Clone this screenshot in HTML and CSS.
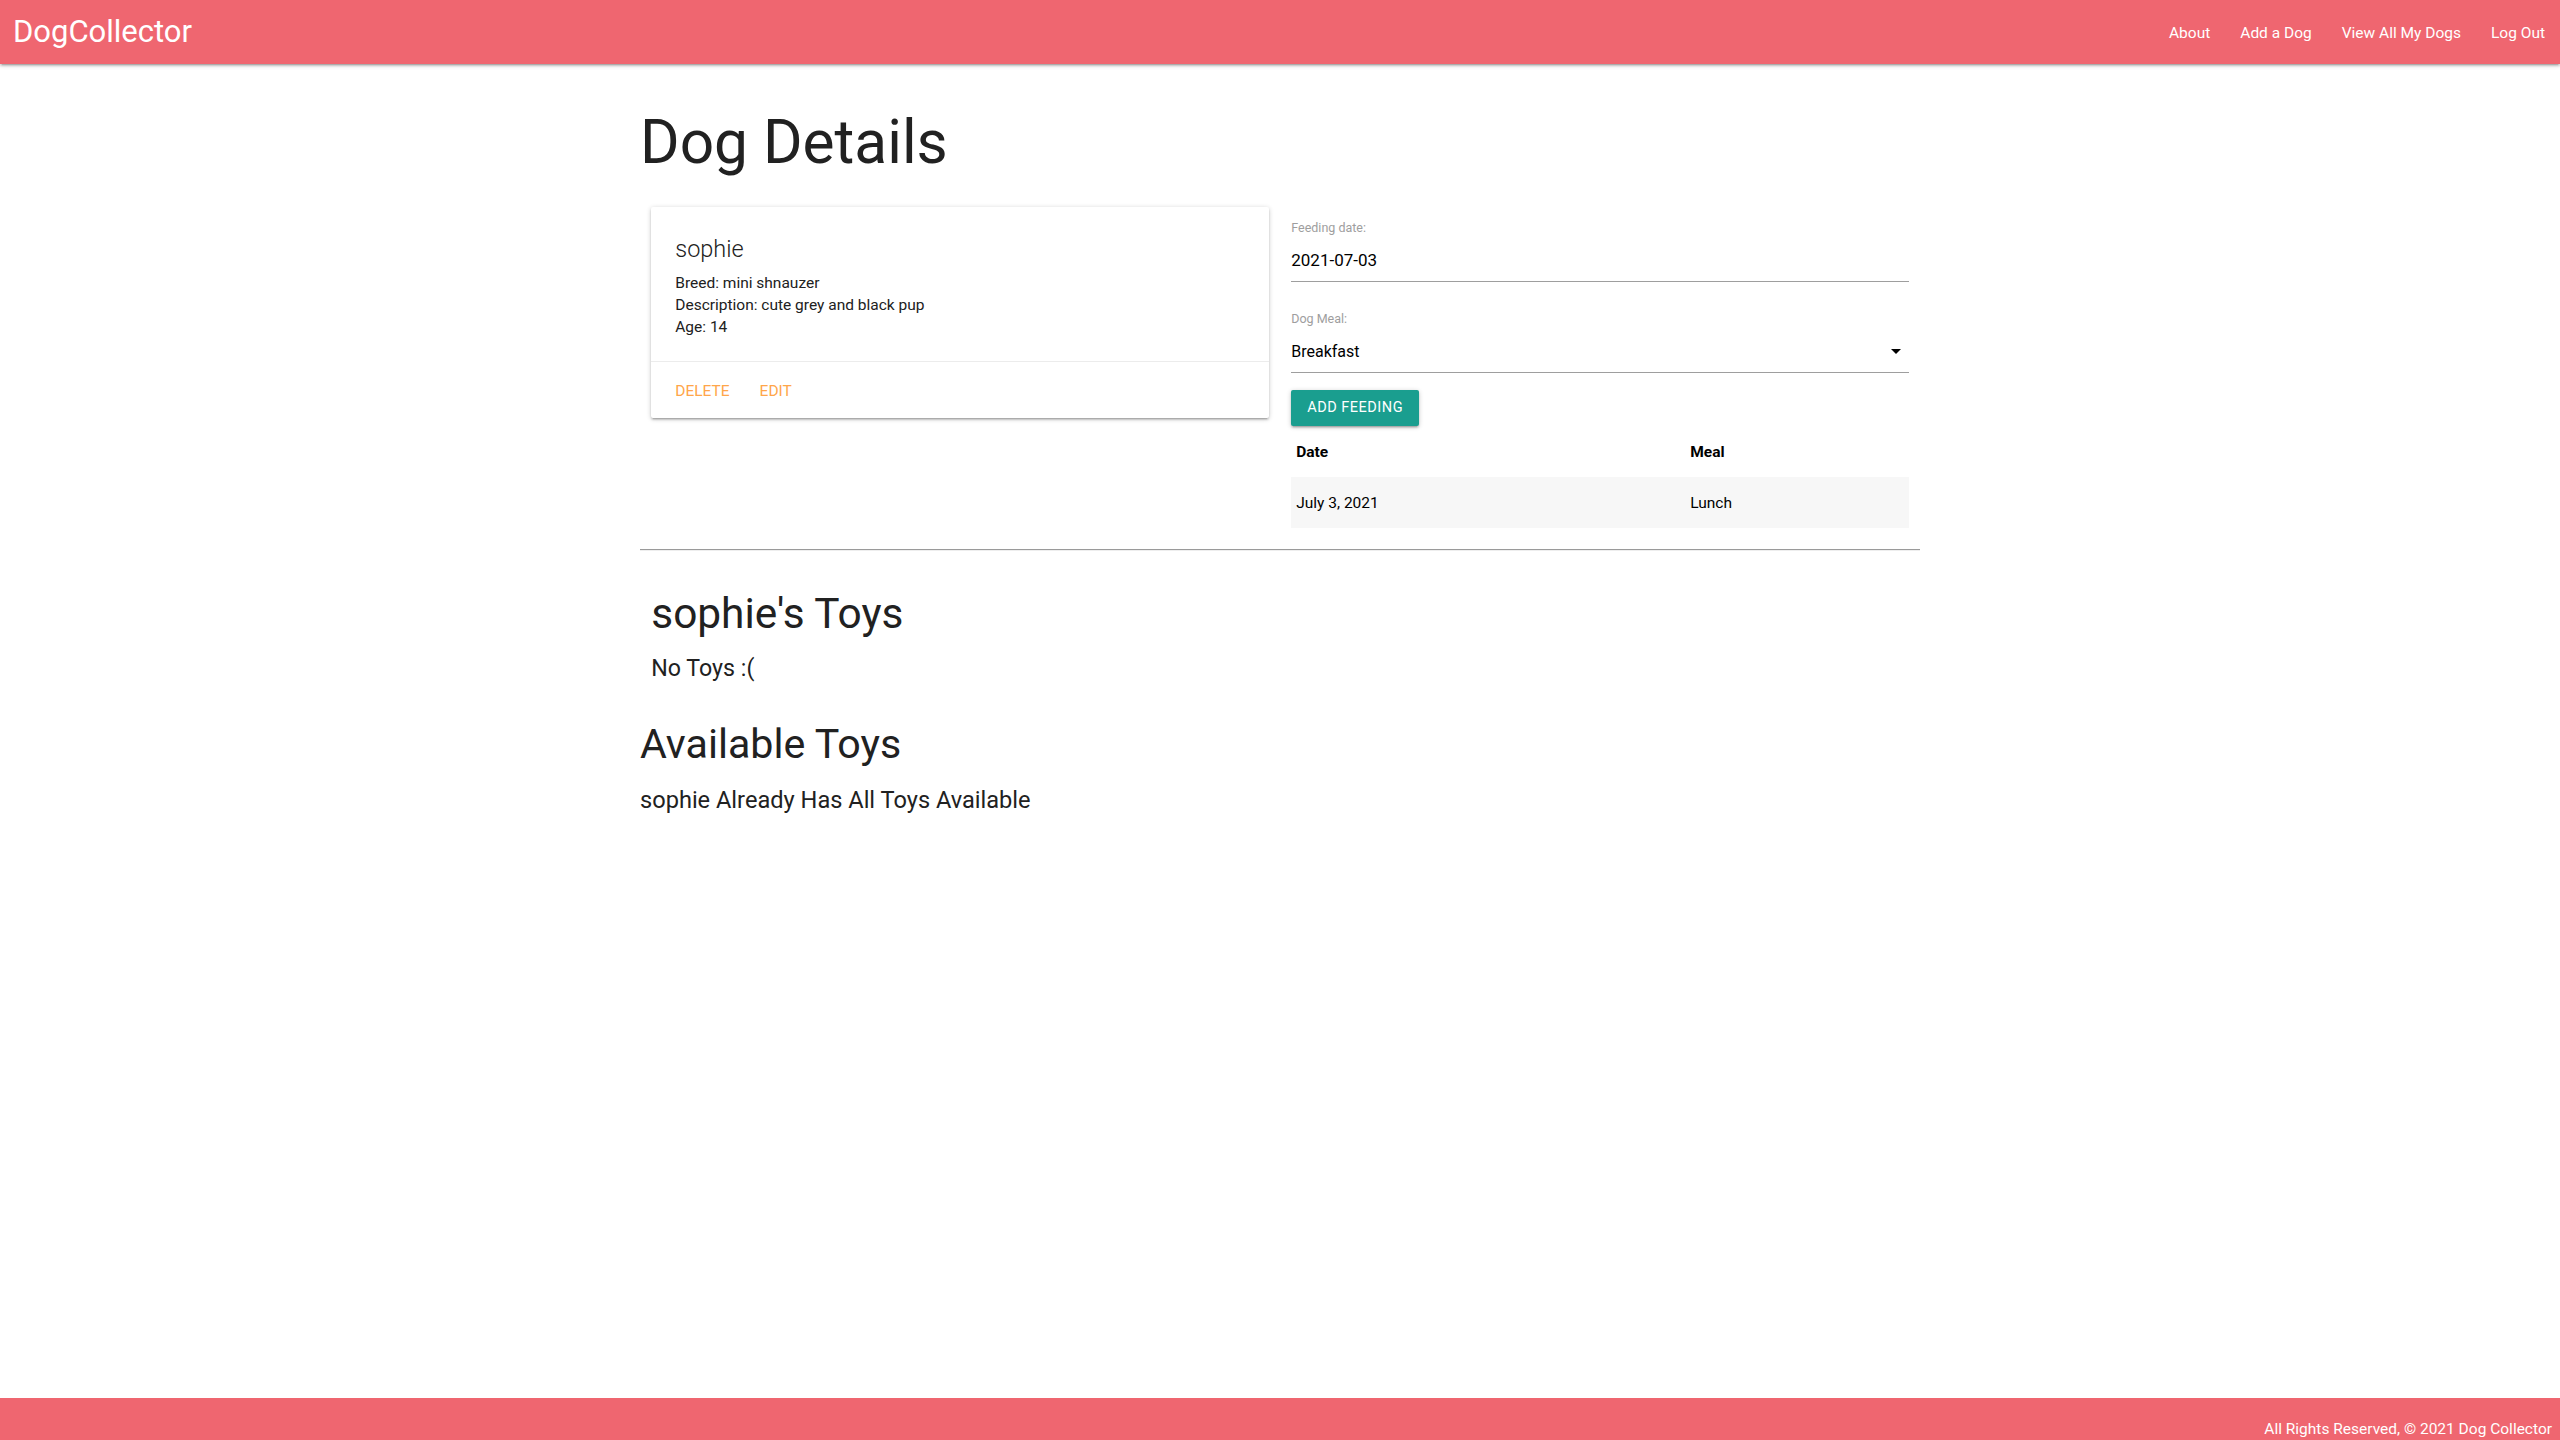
FILE: index.html
```html
<!DOCTYPE html>
<html lang="en">
<head>
<meta charset="utf-8">
<title>Dog Details</title>
<link rel="stylesheet" href="styles.css">
</head>
<body>
<header class="nav">
  <a class="brand" href="#">DogCollector</a>
  <ul class="nav-links">
    <li><a href="#">About</a></li>
    <li><a href="#">Add a Dog</a></li>
    <li><a href="#">View All My Dogs</a></li>
    <li><a href="#">Log Out</a></li>
  </ul>
</header>
<main class="container">
  <h1 class="page-title">Dog Details</h1>
  <div class="row">
    <div class="col">
      <div class="card">
        <div class="card-content">
          <span class="card-title">sophie</span>
          <p>Breed: mini shnauzer</p>
          <p>Description: cute grey and black pup</p>
          <p>Age: 14</p>
        </div>
        <div class="card-action">
          <a href="#">Delete</a>
          <a href="#">Edit</a>
        </div>
      </div>
    </div>
    <div class="col">
      <form class="feed-form">
        <div class="field field-date">
          <label class="field-label">Feeding date:</label>
          <div class="field-input">2021-07-03</div>
        </div>
        <div class="field field-meal">
          <label class="field-label">Dog Meal:</label>
          <div class="field-input field-select">
            <span>Breakfast</span>
            <svg class="caret" width="24" height="24" viewBox="0 0 24 24"><path d="M7 10l5 5 5-5z" fill="#000"/></svg>
          </div>
        </div>
        <button type="button" class="btn">Add Feeding</button>
      </form>
      <table class="feedings">
        <thead>
          <tr><th class="col-date">Date</th><th>Meal</th></tr>
        </thead>
        <tbody>
          <tr><td>July 3, 2021</td><td>Lunch</td></tr>
        </tbody>
      </table>
    </div>
  </div>
  <hr class="divider">
  <div class="toys">
    <h3 class="toys-title">sophie's Toys</h3>
    <h5 class="toys-text">No Toys :(</h5>
  </div>
  <h3 class="avail-title">Available Toys</h3>
  <h5 class="avail-text">sophie Already Has All Toys Available</h5>
</main>
<footer class="footer">
  <span>All Rights Reserved, &copy; 2021 Dog Collector</span>
</footer>
</body>
</html>
```

FILE: styles.css
```css
* { box-sizing: border-box; }
html, body { margin: 0; padding: 0; }
body {
  font-family: Roboto, "Noto Sans", sans-serif;
  color: rgba(0,0,0,0.87);
  background: #fff;
  min-height: 100vh;
  display: flex;
  flex-direction: column;
  font-size: 15px;
  line-height: 1.5;
}
a { text-decoration: none; }

.nav {
  height: 64px;
  background: #ef6670;
  display: flex;
  align-items: center;
  justify-content: space-between;
  padding-left: 13px;
  box-shadow: 0 2px 2px 0 rgba(0,0,0,.14), 0 3px 1px -2px rgba(0,0,0,.12), 0 1px 5px 0 rgba(0,0,0,.2);
  position: relative;
  z-index: 2;
}
.brand {
  color: #fff;
  font-size: 31px;
  line-height: 64px;
}
.nav-links {
  display: flex;
  list-style: none;
  margin: 0;
  padding: 2px 0 0;
}
.nav-links a {
  display: block;
  color: #fff;
  font-size: 15.5px;
  line-height: 62px;
  padding: 0 15px;
}

.container {
  flex: 1;
  width: 1280px;
  margin: 0 auto;
}
.page-title {
  font-size: 60.4px;
  font-weight: 400;
  line-height: 67px;
  margin: 44.5px 0 31.5px;
  color: #212121;
}
.row {
  display: flex;
  align-items: flex-start;
}
.col {
  width: 50%;
  padding: 0 11.25px;
}

.card {
  background: #fff;
  border-radius: 2px;
  box-shadow: 0 2px 2px 0 rgba(0,0,0,.14), 0 3px 1px -2px rgba(0,0,0,.12), 0 1px 5px 0 rgba(0,0,0,.2);
}
.card-content {
  padding: 26px 24px 23px;
}
.card-title {
  display: block;
  font-size: 23.5px;
  font-weight: 300;
  line-height: 32px;
  margin-bottom: 7px;
  color: #212121;
}
.card-content p {
  margin: 0;
  font-size: 15.5px;
  line-height: 22px;
  color: #212121;
}
.card-action {
  border-top: 1px solid rgba(160,160,160,.2);
  padding: 17px 24px 15px;
  display: flex;
  gap: 30px;
}
.card-action a {
  color: #ffa64a;
  text-transform: uppercase;
  font-size: 15.5px;
  line-height: 24px;
}

.feed-form {
  display: flex;
  flex-direction: column;
  align-items: flex-start;
}
.field { width: 100%; }
.field-date { margin-top: 13px; }
.field-meal { margin-top: 29px; }
.field-label {
  display: block;
  font-size: 12.5px;
  line-height: 16px;
  color: #9e9e9e;
}
.field-input {
  height: 46px;
  padding-top: 5px;
  line-height: 39px;
  font-size: 17px;
  color: #000;
  border-bottom: 1px solid #9e9e9e;
}
.field-select {
  display: flex;
  justify-content: space-between;
  align-items: center;
  padding-top: 3px;
  font-size: 16px;
  height: 46px;
}
.caret { margin-right: 1px; margin-top: 0; }
.btn {
  margin-top: 17px;
  height: 36px;
  line-height: 36px;
  padding: 0 16px;
  border: none;
  border-radius: 2px;
  background: #1a9e8f;
  color: #fff;
  font-family: Roboto, "Noto Sans", sans-serif;
  font-size: 14.5px;
  letter-spacing: .5px;
  text-transform: uppercase;
  box-shadow: 0 2px 2px 0 rgba(0,0,0,.14), 0 3px 1px -2px rgba(0,0,0,.12), 0 1px 5px 0 rgba(0,0,0,.2);
}

.feedings {
  width: 100%;
  border-collapse: collapse;
  font-size: 15.5px;
}
.feedings th, .feedings td {
  text-align: left;
  padding: 15px 5px;
  color: #000;
}
.feedings th {
  font-weight: 700;
  line-height: 22px;
  padding-top: 15px;
  padding-bottom: 14px;
}
.feedings td { line-height: 21px; padding-top: 16px; padding-bottom: 14px; }
.col-date { width: 394px; }
.feedings tbody tr { background: #f7f7f7; }

.divider {
  margin: 21px 0 0;
  border: none;
  border-top: 1px solid #9a9a9a;
  border-bottom: 1px solid #eeeeee;
  height: 0;
}
.toys { padding: 0 11.25px; }
.toys-title, .avail-title {
  font-weight: 400;
  line-height: 45px;
  color: #212121;
  margin: 0;
}
.toys-title { font-size: 42.4px; }
.avail-title { font-size: 41.2px; }
.toys-text, .avail-text {
  font-weight: 400;
  line-height: 26px;
  color: #212121;
  margin: 0;
}
.toys-text { font-size: 23.2px; }
.avail-text { font-size: 23.6px; }
.toys-title { margin-top: 40px; }
.toys-text { margin-top: 18.5px; }
.avail-title { margin-top: 41.5px; }
.avail-text { margin-top: 19.5px; }

.footer {
  height: 42px;
  background: #ef6670;
  color: #fff;
  text-align: right;
  padding: 21px 8px 0 0;
  font-size: 15.5px;
  line-height: 20px;
}
```
